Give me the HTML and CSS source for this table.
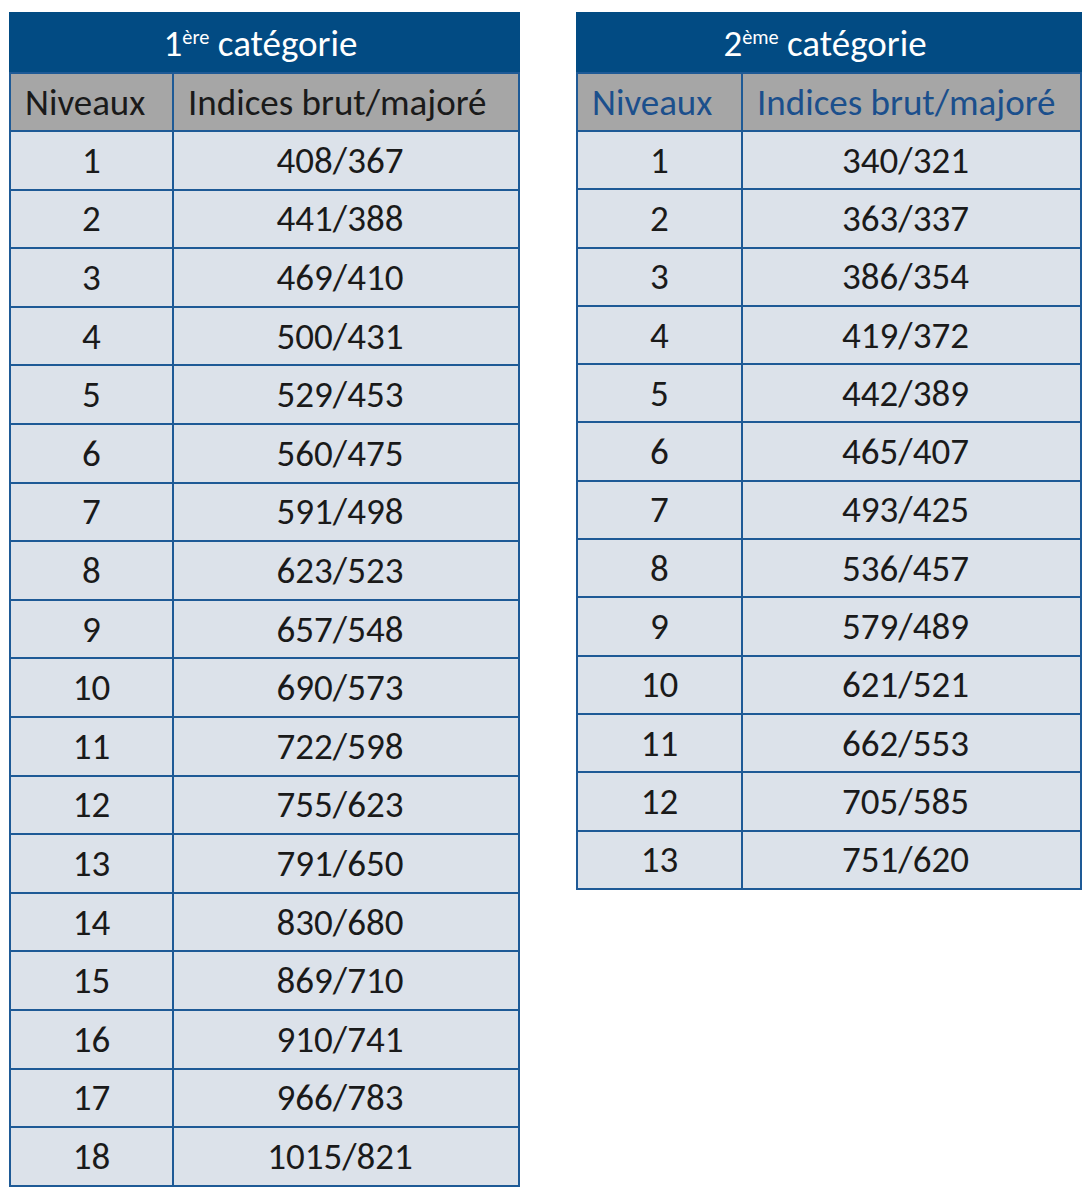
FILE: index.html
```html
<!DOCTYPE html>
<html lang="fr">
<head>
<meta charset="utf-8">
<title>Catégories</title>
<link rel="stylesheet" href="styles.css">
</head>
<body>
<div class="wrap">
  <table class="grid t1">
    <colgroup><col class="c1"><col class="c2"></colgroup>
    <tr class="title"><th colspan="2">1<sup>ère</sup> catégorie</th></tr>
    <tr class="sub"><th>Niveaux</th><th>Indices brut/majoré</th></tr>
    <tr><td>1</td><td>408/367</td></tr>
    <tr><td>2</td><td>441/388</td></tr>
    <tr><td>3</td><td>469/410</td></tr>
    <tr><td>4</td><td>500/431</td></tr>
    <tr><td>5</td><td>529/453</td></tr>
    <tr><td>6</td><td>560/475</td></tr>
    <tr><td>7</td><td>591/498</td></tr>
    <tr><td>8</td><td>623/523</td></tr>
    <tr><td>9</td><td>657/548</td></tr>
    <tr><td>10</td><td>690/573</td></tr>
    <tr><td>11</td><td>722/598</td></tr>
    <tr><td>12</td><td>755/623</td></tr>
    <tr><td>13</td><td>791/650</td></tr>
    <tr><td>14</td><td>830/680</td></tr>
    <tr><td>15</td><td>869/710</td></tr>
    <tr><td>16</td><td>910/741</td></tr>
    <tr><td>17</td><td>966/783</td></tr>
    <tr><td>18</td><td>1015/821</td></tr>
  </table>
  <table class="grid t2">
    <colgroup><col class="c1"><col class="c2"></colgroup>
    <tr class="title"><th colspan="2">2<sup>ème</sup> catégorie</th></tr>
    <tr class="sub blue"><th>Niveaux</th><th>Indices brut/majoré</th></tr>
    <tr><td>1</td><td>340/321</td></tr>
    <tr><td>2</td><td>363/337</td></tr>
    <tr><td>3</td><td>386/354</td></tr>
    <tr><td>4</td><td>419/372</td></tr>
    <tr><td>5</td><td>442/389</td></tr>
    <tr><td>6</td><td>465/407</td></tr>
    <tr><td>7</td><td>493/425</td></tr>
    <tr><td>8</td><td>536/457</td></tr>
    <tr><td>9</td><td>579/489</td></tr>
    <tr><td>10</td><td>621/521</td></tr>
    <tr><td>11</td><td>662/553</td></tr>
    <tr><td>12</td><td>705/585</td></tr>
    <tr><td>13</td><td>751/620</td></tr>
  </table>
</div>
</body>
</html>
```

FILE: styles.css
```css
html, body {
  margin: 0;
  padding: 0;
  background: #ffffff;
}
body {
  font-family: "Carlito", "Open Sans", "Liberation Sans", sans-serif;
  color: #1a1a1a;
}
.wrap {
  display: flex;
  align-items: flex-start;
  gap: 56px;
  padding: 12px 0 0 9px;
}
.grid {
  border-collapse: collapse;
  table-layout: fixed;
  font-size: 37px;
}
.t1 { width: 511px; }
.t1 .c1 { width: 163px; }
.t2 { width: 506px; }
.t2 .c1 { width: 165px; }
.grid th, .grid td {
  border: 2px solid #1e5a96;
  padding: 0;
  font-weight: normal;
  line-height: 1;
}
.grid tr { height: 58.6px; }
.t2 tr { height: 58.3px; }
.grid tr.title { height: 60px; }
.grid tr.sub { height: 58px; }
.title th {
  background: #024b83;
  color: #ffffff;
  text-align: center;
  padding-right: 8px;
  border-color: #024b83;
  border-bottom-color: #1e5a96;
}
.title sup {
  font-size: 0.55em;
  vertical-align: 0.6em;
  line-height: 0;
}
.sub th {
  background: #a6a6a6;
  color: #1a1a1a;
  text-align: left;
  padding-left: 14px;
}
.sub.blue th { color: #1b4f8c; }
.grid td {
  background: #dce2ea;
  text-align: center;
}
.grid td + td { padding-right: 12px; }
```
